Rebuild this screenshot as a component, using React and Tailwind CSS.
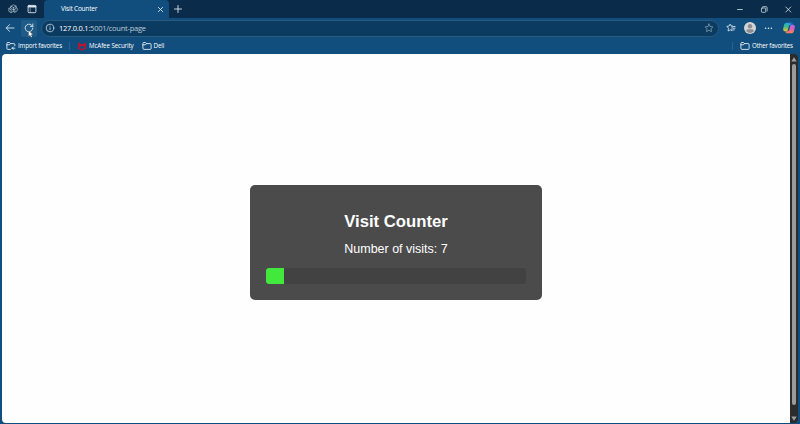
import React from "react";

function Icon({ size = 10, className = "", sw = 1, children, box = 10 }) {
  return (
    <svg width={size} height={size} viewBox={`0 0 ${box} ${box}`} fill="none" stroke="currentColor" strokeWidth={sw} strokeLinecap="round" strokeLinejoin="round" className={`block shrink-0 ${className}`}>
      {children}
    </svg>
  );
}

function Folder() {
  return (
    <Icon sw={0.8}>
      <path d="M.9 2.3a.8.8 0 0 1 .8-.8h1.7l1.1 1.1h3.7a.9.9 0 0 1 .9.9v4a.9.9 0 0 1-.9.9H1.8a.9.9 0 0 1-.9-.9zM.9 3.8h2.5l1.1-1.2" />
    </Icon>
  );
}

function Copilot() {
  return (
    <svg width="12" height="12" viewBox="0 0 12 12" className="block shrink-0">
      <defs>
        <linearGradient id="cpA" x1="0" y1="0" x2="0" y2="1">
          <stop offset="0" stopColor="#1ba6e8" />
          <stop offset=".5" stopColor="#45bd83" />
          <stop offset="1" stopColor="#f0c52c" />
        </linearGradient>
        <linearGradient id="cpB" x1="0" y1="0" x2="0" y2="1">
          <stop offset="0" stopColor="#a36af2" />
          <stop offset=".5" stopColor="#e45eae" />
          <stop offset="1" stopColor="#f28b4b" />
        </linearGradient>
      </defs>
      <path d="M3.9.7H8c.9 0 1.2.6 1.5 1.4l.3.9H7.2c-.8 0-1.2.5-1.4 1.2L4.9 7.7c-.3 1-.8 1.5-1.6 1.5H2.1C.5 9.2-.1 8 .2 6.4l.9-3.6C1.5 1.4 2.4.7 3.9.7Z" fill="url(#cpA)" />
      <path d="M8.1 11.3H4c-.9 0-1.2-.6-1.5-1.4l-.2-.7h2.5c.8 0 1.2-.5 1.4-1.2L7.1 4.3c.3-1 .8-1.5 1.6-1.5h1.2c1.6 0 2.2 1.2 1.9 2.8l-.9 3.6c-.4 1.4-1.3 2.1-2.8 2.1Z" fill="url(#cpB)" />
      <path d="M6.6.7H8c.9 0 1.2.6 1.5 1.4l.3.9H7.8z" fill="#3659dc" />
    </svg>
  );
}

function TabStrip() {
  return (
    <div className="flex h-[18px] shrink-0 items-stretch bg-[#0a2b49] text-[#d9e5ef]">
      <div className="flex w-[44px] shrink-0 items-center gap-[9px] pl-[8px]">
        <Icon sw={0.65} className="text-[#b5c7d6]">
          <path d="M3 2.2 5.6.8l2.5 1.3v2.3L5.5 5.7 3 4.4zM3 2.2l2.5 1.3 2.6-1.4M5.5 3.5v2.2M3 3.3.8 4.5v2.8L3.1 8.6l2.2-1.2V5.6M.8 4.5l2.3 1.3M3.1 5.8v2.8M8.1 3.5l1.1.6v2.8L6.8 8.2 5.3 7.4M6.8 5.4v2.8" />
        </Icon>
        <Icon sw={0.9}>
          <rect x="1.1" y="1.4" width="7.8" height="7.3" rx="1" />
          <path d="M1.5 2.5h7" strokeWidth="1.8" />
          <path d="M3.2 4.4v4" strokeWidth=".5" />
        </Icon>
      </div>
      <div className="flex w-[125px] shrink-0 items-center justify-between rounded-t-[4px] bg-[#114e7d] pl-[17px] pr-[5px]">
        <span className="whitespace-nowrap text-[6.5px] leading-[10px] tracking-[-0.21px] text-white">Visit Counter</span>
        <Icon size={7} box={7} sw={0.9}><path d="M1.4 1.4l4.2 4.2M5.6 1.4 1.4 5.6" /></Icon>
      </div>
      <div className="flex items-center pl-[4px]">
        <Icon size={10} sw={0.9}><path d="M5 1.5v7M1.5 5h7" /></Icon>
      </div>
      <div className="ml-auto flex items-center gap-[15px] pr-[7px]">
        <Icon size={9} box={9} sw={0.8}><path d="M1.5 4.5h4.8" /></Icon>
        <Icon size={9} box={9} sw={0.75}>
          <rect x="1.4" y="3" width="4.3" height="4.3" rx=".7" />
          <path d="M2.8 1.7h3.4a.9.9 0 0 1 .9.9v3.4" />
        </Icon>
        <Icon size={9} box={9} sw={0.8}><path d="m1.8 2 5 5M6.8 2l-5 5" /></Icon>
      </div>
    </div>
  );
}

function Toolbar() {
  return (
    <div className="flex h-[20px] shrink-0 items-center text-[#d9e6f0]">
      <div className="flex w-[21px] justify-end">
        <Icon size={10} sw={0.9} className="mr-[6px]"><path d="M9 5H1.2M4.6 1.6 1.2 5l3.4 3.4" /></Icon>
      </div>
      <div className="relative flex h-[17px] w-[16px] items-center justify-center rounded-[2px] bg-[#205b88]">
        <Icon size={10} sw={0.9}><path d="M8.8 5A3.8 3.8 0 1 1 7.7 2.3L8.8 3.4M8.8 1v2.4H6.4" /></Icon>
        <svg width="6" height="8" viewBox="0 0 6 8" className="absolute left-[7px] top-[10px]">
          <path d="M.5.4v6.1L2 5.2l1 2.3 1.2-.5-1-2.2h2z" fill="#fff" stroke="#17212b" strokeWidth=".3" />
        </svg>
      </div>
      <div className="ml-[4px] flex h-[17px] w-[678px] items-center rounded-full border border-[#295b80] bg-[#0b3b61] pl-[3px] pr-[4px]">
        <Icon size={10} sw={0.75}>
          <circle cx="5" cy="5" r="3.8" />
          <path d="M5 4.7v2M5 3.1v.1" />
        </Icon>
        <span className="ml-[4px] whitespace-nowrap text-[7.5px] leading-[12px] tracking-[-0.25px] text-[#bccbd8]">
          <span className="text-white">127.0.0.1</span>:5001/count-page
        </span>
        <Icon size={10} sw={0.7} className="ml-auto text-[#8fa9bd]">
          <path d="m5 1 1.2 2.5 2.7.4L7 5.8l.5 2.8L5 7.3 2.5 8.6 3 5.8 1.1 3.9l2.7-.4z" />
        </Icon>
      </div>
      <div className="ml-[7px] flex items-center">
        <Icon size={10} sw={0.85}>
          <path d="M6.2 3 5 2.8 4.1 1.1 3.2 3l-2.4.4 1.7 1.8L2.1 8l2.4-1.2 1.4.8M6.2 3l-.3 4.6M7.2 3.5h1.9M7.4 5.2h1.7M7.3 6.9h1" />
        </Icon>
        <svg width="12" height="12" viewBox="0 0 12 12" className="ml-[8px] block">
          <circle cx="6" cy="6" r="6" fill="#d4d4d5" />
          <circle cx="6" cy="4.3" r="2.2" fill="#8b8d91" />
          <path d="M2.3 9.2C2.3 7.8 3.2 7.2 4.2 7.2h3.6c1 0 1.9.6 1.9 2-1 1.2-2.2 1.7-3.7 1.7s-2.8-.6-3.7-1.7Z" fill="#8b8d91" />
        </svg>
        <svg width="10" height="10" viewBox="0 0 10 10" className="ml-[8px] block fill-[#e3edf4]">
          <circle cx="1.6" cy="5.3" r=".8" />
          <circle cx="4.5" cy="5.3" r=".8" />
          <circle cx="7.4" cy="5.3" r=".8" />
        </svg>
        <div className="ml-[9px]"><Copilot /></div>
      </div>
    </div>
  );
}

function FavoritesBar() {
  return (
    <div className="flex h-[16px] shrink-0 items-center whitespace-nowrap text-[6.2px] leading-[10px] text-white">
      <div className="flex w-[69px] items-center gap-[2px] pl-[6px]">
        <Icon sw={0.8}>
          <path d="M4.3 8.4H1.8a.9.9 0 0 1-.9-.9V2.3a.8.8 0 0 1 .8-.8h1.7l1.1 1.1h3.4a.9.9 0 0 1 .9.9v1.2M.9 3.8h2.5l1.1-1.2M8.9 7.2H6M7.2 6 6 7.2l1.2 1.2" />
        </Icon>
        <span className="tracking-[-0.15px]">Import favorites</span>
      </div>
      <div className="h-[8px] w-px bg-[#2b638d]" />
      <svg width="8" height="9" viewBox="0 0 8 9" className="ml-[8px] block shrink-0">
        <path d="M0 .4 4 2.5 8 .4v6.1L4 8.7 0 6.5V5.2l4 2 2.3-1.2V3.4L4 4.6 1.7 3.4v2.5L0 5.2z" fill="#c4122f" />
      </svg>
      <span className="ml-[3px] w-[45px] tracking-[-0.1px]">McAfee Security</span>
      <div className="ml-[7.6px] flex items-center gap-[2px]">
        <Folder />
        <span className="tracking-[-0.1px]">Dell</span>
      </div>
      <div className="ml-auto flex items-center">
        <div className="mr-[7px] h-[8px] w-px bg-[#2b638d]" />
        <Folder />
        <span className="ml-[2px] w-[41px] tracking-[-0.18px]">Other favorites</span>
        <div className="w-[7px]" />
      </div>
    </div>
  );
}

function Scrollbar() {
  return (
    <div className="flex w-[8px] shrink-0 flex-col items-center rounded-r-[3px] bg-[#2b2c2d] pb-[2px] pt-[3px]">
      <svg width="6" height="5" viewBox="0 0 6 5" className="block shrink-0"><path d="M3 .3 5.7 4.4H.3z" fill="#a0a0a0" /></svg>
      <div className="mt-[2px] h-[341px] w-[4px] shrink-0 rounded-full bg-[#9b9b9b]" />
      <svg width="6" height="5" viewBox="0 0 6 5" className="mt-auto block shrink-0"><path d="M3 4.7 5.7.6H.3z" fill="#a0a0a0" /></svg>
    </div>
  );
}

export default function App() {
  return (
    <div className="flex h-[424px] w-[800px] flex-col overflow-hidden bg-[#114e7d] font-['Open_Sans','Noto_Sans',sans-serif]">
      <TabStrip />
      <Toolbar />
      <FavoritesBar />
      <div className="mx-[2px] mb-[1px] flex min-h-0 flex-1 overflow-hidden rounded-[4px]">
        <main className="flex flex-1 flex-col items-center bg-[#fefefe] pt-[131px] font-['Liberation_Sans',Arial,sans-serif]">
          <section className="h-[115px] w-[292px] rounded-[5px] bg-[#4b4b4c] px-[16px] pt-[27px] text-center text-white">
            <h1 className="text-[16.7px] font-bold leading-[20px]">Visit Counter</h1>
            <p className="mt-[9px] text-[12.5px] leading-[16px]">Number of visits: 7</p>
            <div className="mt-[11px] h-[16px] overflow-hidden rounded-[3px] bg-[#424243]">
              <div className="h-full w-[7%] bg-[#42e83b]" />
            </div>
          </section>
        </main>
        <Scrollbar />
      </div>
    </div>
  );
}
